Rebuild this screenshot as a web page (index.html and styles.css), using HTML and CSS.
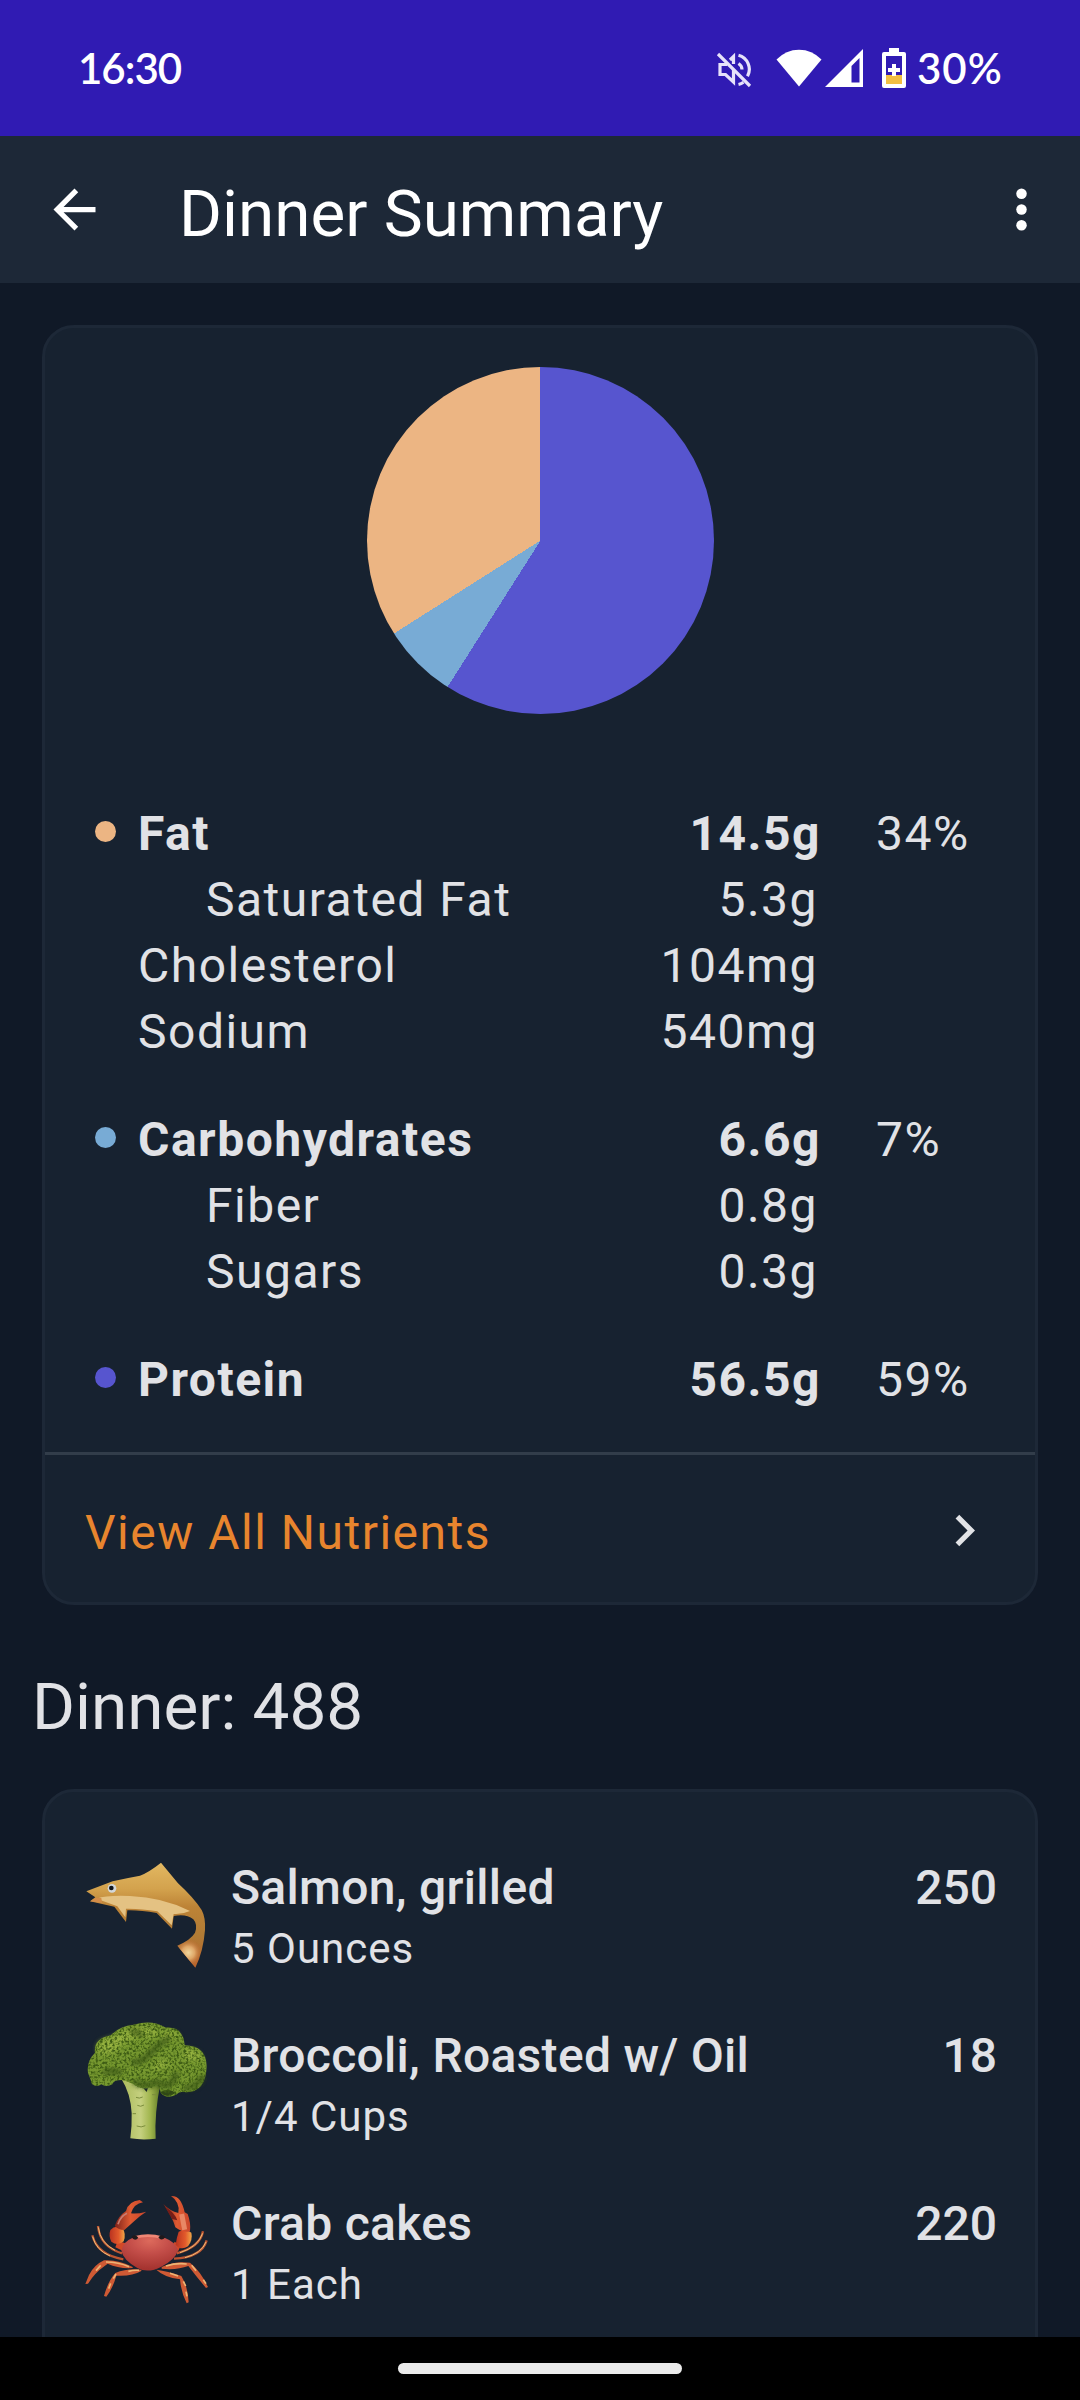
FILE: index.html
```html
<!DOCTYPE html>
<html lang="en">
<head>
  <meta charset="UTF-8">
  <meta name="viewport" content="width=device-width, initial-scale=1.0">
  <title>Dinner Summary</title>
  <link rel="stylesheet" href="styles.css">
</head>
<body>

  <div class="status-bar">
    <span class="clock">16:30</span>
    <div class="status-icons">
      <svg class="icon-mute" viewBox="0 0 36 36" fill="none" stroke="#e6e2fa" stroke-width="3.2">
        <path d="M11 12.500H4v10h5.500l8 7.500V18M14 8l3.500-3.500V12" />
        <path d="M22.500 3.200a14.500 14.500 0 0 1 9 21M22.500 32.500a14 14 0 0 0 5-2.200M22.500 11.500a7.500 7.500 0 0 1 3.500 6" />
        <path d="M2 2l32 32" stroke-width="3.2" />
      </svg>
      <svg class="icon-wifi" viewBox="0 0 46 38"><path d="M.5 10.500Q10 .7 23 .7t22.500 9.800L23 37.500z" fill="#fff" /></svg>
      <svg class="icon-signal" viewBox="0 0 38 38"><path d="M38 0v38H0z M34.500 9L26.500 17v16.500h8z" fill="#fff" fill-rule="evenodd" /></svg>
      <svg class="icon-battery" viewBox="0 0 24 40">
        <path d="M7 0h10v4h5q2 0 2 2v32q0 2-2 2H2q-2 0-2-2V6q0-2 2-2h5z M4 8v28h16V8z" fill="#fff" fill-rule="evenodd" />
        <path d="M4 27h16v9H4z" fill="#f2be42" />
        <path d="M10 16h4v4h4v4h-4v4h-4v-4H6v-4h4z" fill="#fff" />
      </svg>
      <span class="battery-level">30%</span>
    </div>
  </div>

  <header class="app-bar">
    <svg class="app-icon" viewBox="0 0 24 24" fill="#fff"><path d="M20 11H7.830l5.590-5.590L12 4l-8 8 8 8 1.410-1.410L7.830 13H20v-2z" /></svg>
    <h1>Dinner Summary</h1>
    <svg class="app-icon" viewBox="0 0 24 24" fill="#fff"><circle cx="12" cy="6" r="2" /><circle cx="12" cy="12" r="2" /><circle cx="12" cy="18" r="2" /></svg>
  </header>

  <main>
    <section class="card summary">
      <div class="pie"></div>

      <div class="nutrients">
        <div class="group">
          <div class="row main"><i class="dot fat"></i><span class="label">Fat</span><span class="amount">14.5g</span><span class="percent">34%</span></div>
          <div class="row sub"><span class="label">Saturated Fat</span><span class="amount">5.3g</span></div>
          <div class="row"><span class="label">Cholesterol</span><span class="amount">104mg</span></div>
          <div class="row"><span class="label">Sodium</span><span class="amount">540mg</span></div>
        </div>
        <div class="group">
          <div class="row main"><i class="dot carbs"></i><span class="label">Carbohydrates</span><span class="amount">6.6g</span><span class="percent">7%</span></div>
          <div class="row sub"><span class="label">Fiber</span><span class="amount">0.8g</span></div>
          <div class="row sub"><span class="label">Sugars</span><span class="amount">0.3g</span></div>
        </div>
        <div class="group">
          <div class="row main"><i class="dot protein"></i><span class="label">Protein</span><span class="amount">56.5g</span><span class="percent">59%</span></div>
        </div>
      </div>

      <a class="view-all">
        <span>View All Nutrients</span>
        <svg class="chevron" viewBox="0 0 24 24" fill="#e2e3e6"><path d="M10 6L8.590 7.410 13.170 12l-4.580 4.590L10 18l6-6z" /></svg>
      </a>
    </section>

    <h2>Dinner: 488</h2>

    <section class="card foods">
      <div class="food">
        <svg class="food-icon" viewBox="72 36 378 378">
          <defs>
            <linearGradient id="fishBody" x1="0" y1="0" x2="0" y2="1">
              <stop offset="0" stop-color="#e2b862" />
              <stop offset=".25" stop-color="#d3a24d" />
              <stop offset=".42" stop-color="#bd8336" />
              <stop offset=".7" stop-color="#b07b35" />
              <stop offset="1" stop-color="#b9632c" />
            </linearGradient>
            <radialGradient id="fishTail" cx="385" cy="338" r="42" gradientUnits="userSpaceOnUse">
              <stop offset="0" stop-color="#f0d69c" />
              <stop offset=".45" stop-color="#dfa768" />
              <stop offset="1" stop-color="#b9632c" stop-opacity="0" />
            </radialGradient>
          </defs>
          <path d="M79 154L158 124Q200 114 240 107Q268 96 303 68L354 130Q400 172 425 210Q437 232 435 270Q430 335 406 383L352 317Q392 300 405 278Q414 254 400 238Q378 220 341 228L336 266L290 219Q240 210 202 211L198 246L163 200L90 184L106 172Z" fill="url(#fishBody)" />
          <path d="M110 176Q140 165 210 168Q310 172 390 213Q365 224 341 222L335 256L292 214Q240 205 198 206L196 232L172 199Z" fill="#e4c283" />
          <path d="M352 317Q385 303 401 285L427 320L406 383z" fill="url(#fishTail)" />
          <path d="M91 184L107 173L124 174L126 189z" fill="#d48d49" />
          <circle cx="156" cy="145" r="13" fill="#d3d7d9" />
          <circle cx="154" cy="144" r="7" fill="#10151b" />
        </svg>
        <div class="food-text"><span class="food-name">Salmon, grilled</span><span class="serving">5 Ounces</span></div>
        <span class="calories">250</span>
      </div>

      <div class="food">
        <svg class="food-icon" viewBox="72 60 378 378">
          <defs>
            <linearGradient id="stem" x1="0" y1="0" x2="1" y2="0">
              <stop offset="0" stop-color="#a9b95a" />
              <stop offset=".5" stop-color="#c5d07f" />
              <stop offset=".75" stop-color="#a0b54d" />
              <stop offset="1" stop-color="#5f7a26" />
            </linearGradient>
            <filter id="florets" x="0" y="0" width="1" height="1" color-interpolation-filters="sRGB">
              <feTurbulence type="fractalNoise" baseFrequency=".14" numOctaves="2" seed="4" />
              <feColorMatrix values="0 0 0 0 .24  0 0 0 0 .36  0 0 0 0 .08  3.500 0 0 0 -1.500" />
              <feComposite in2="SourceAlpha" operator="in" result="specks" />
              <feMerge><feMergeNode in="SourceGraphic" /><feMergeNode in="specks" /></feMerge>
            </filter>
            <filter id="shade"><feGaussianBlur stdDeviation="8" /></filter>
          </defs>
          <path d="M183 235Q212 280 215 340Q216 380 211 415Q248 421 287 416Q283 340 301 252L268 250L260 276Q235 245 215 230Z" fill="url(#stem)" />
          <path d="M228 292q10 5 20-1M232 316q10 6 20-1M230 378q14 6 26-1M218 341h10M276 284h12" fill="none" stroke="#7c8d3d" stroke-width="3" />
          <g filter="url(#florets)">
            <path d="M105 158Q100 116 153 106Q177 78 222 74Q275 57 318 83Q370 80 374 136Q438 137 440 198Q438 276 378 277Q360 272 348 284Q320 298 303 280L296 258Q260 270 235 262Q205 242 185 240Q160 240 157 253Q139 263 124 253Q110 264 96 252Q92 238 84 219Q79 184 105 158Z" fill="#76982f" />
            <path d="M160 112Q220 70 290 90Q305 104 260 110Q190 112 170 150Q140 170 112 152Q105 120 160 112M370 150Q420 140 428 185Q400 170 380 180M280 190Q312 175 335 198Q300 190 288 218M300 105Q340 84 360 110Q330 106 318 130" fill="#97b33f" filter="url(#shade)" />
            <g filter="url(#shade)" fill="none" stroke="#334b14" stroke-width="15" opacity=".8">
              <path d="M215 190Q255 185 285 145L330 110M220 245Q260 265 292 245Q330 280 350 215M130 220Q160 205 185 222M370 265Q420 260 428 225M212 92L250 105" />
            </g>
            <path d="M303 275Q328 264 347 278Q323 297 303 280" fill="#304816" />
          </g>
        </svg>
        <div class="food-text"><span class="food-name">Broccoli, Roasted w/ Oil</span><span class="serving">1/4 Cups</span></div>
        <span class="calories">18</span>
      </div>

      <div class="food">
        <svg class="food-icon" viewBox="72 54 378 378">
          <defs>
            <radialGradient id="shell" cx=".5" cy=".15" r=".8">
              <stop offset="0" stop-color="#dd6a5c" />
              <stop offset=".45" stop-color="#c44e49" />
              <stop offset="1" stop-color="#a53430" />
            </radialGradient>
            <linearGradient id="claw" x1="0" y1="0" x2="1" y2="0">
              <stop offset="0" stop-color="#7c2119" />
              <stop offset=".5" stop-color="#e05b32" />
              <stop offset="1" stop-color="#c9452b" />
            </linearGradient>
            <linearGradient id="joint" x1="0" y1="0" x2="1" y2="0">
              <stop offset="0" stop-color="#b93220" />
              <stop offset=".6" stop-color="#e25a2b" />
              <stop offset="1" stop-color="#f0a847" />
            </linearGradient>
          </defs>
          <!-- thin upper legs -->
          <g fill="none" stroke="#bd5531" stroke-width="7">
            <path d="M186 250Q120 230 114 168M190 268Q112 255 97 196M350 250Q420 232 429 184M342 266Q425 262 440 211" />
          </g>
          <g fill="none" stroke="#e9bd77" stroke-width="3">
            <path d="M165 241Q120 218 115 172M150 258Q108 240 98 200M360 248Q414 231 428 190M375 263Q425 250 438 216" />
          </g>
          <!-- lower legs -->
          <g fill="#cf5a34">
            <path d="M218 291Q174 268 132 271Q102 285 87 315L76 342L84 341Q106 307 130 291L143 281Q178 297 218 294z" />
            <path d="M244 299Q202 294 166 309Q145 332 132 378L139 380Q159 354 169 317Q215 320 244 303z" />
            <path d="M305 291Q344 272 390 278Q421 302 444 351L438 354Q408 318 385 288Q350 301 305 296z" />
            <path d="M289 299Q323 303 364 318Q384 350 386 397L380 400Q363 366 360 328Q313 322 289 299z" />
          </g>
          <path d="M138 276Q175 276 207 290M108 302l14-16M160 326l8-14M146 356l6-16M205 304Q220 300 237 301M318 288Q350 278 380 282M395 286l13 16M430 329l8 12M330 310l24 8M370 334l7 14M378 365l3 14" fill="none" stroke="#edb574" stroke-width="5" />
          <!-- claws -->
          <path d="M173 212L197 220L191 244L166 232zM344 215L362 228L353 246L337 229z" fill="#d24827" />
          <path d="M151 180Q166 164 188 175Q199 192 191 214Q173 230 154 215Q145 198 151 180" fill="url(#joint)" />
          <path d="M356 185Q379 174 394 188Q399 209 384 229Q362 243 347 224Q350 202 356 185" fill="url(#joint)" />
          <path d="M164 168Q174 138 198 123Q205 94 239 90L249 97Q222 101 213 130Q230 133 259 125Q238 138 224 152L193 180Q178 181 164 168" fill="url(#claw)" />
          <path d="M346 172Q337 140 310 102Q330 123 355 129Q361 97 333 78Q363 75 374 127L383 132Q393 158 390 184Q371 190 346 172" fill="url(#claw)" />
          <path d="M174 163Q181 140 201 130" fill="none" stroke="#c87d71" stroke-width="5" />
          <path d="M315 110Q344 127 352 151L336 147z" fill="#751d17" />
          <path d="M365 132l9 47" stroke="#e88765" stroke-width="15" />
          <!-- shell -->
          <path d="M217 204Q263 188 315 204Q348 217 354 240Q347 268 304 290Q264 311 232 294Q189 269 184 242Q189 215 217 204z" fill="url(#shell)" />
          <path d="M226 202Q264 191 308 203" fill="none" stroke="#ef8775" stroke-width="8" />
          <path d="M214 201q10-11 21 2q-10 13-21-2M295 202q11-12 21 0q-12 13-21 0" fill="#20191b" />
        </svg>
        <div class="food-text"><span class="food-name">Crab cakes</span><span class="serving">1 Each</span></div>
        <span class="calories">220</span>
      </div>
    </section>
  </main>

  <footer class="nav-bar"><div class="nav-pill"></div></footer>

</body>
</html>
```

FILE: styles.css
```css
* {
  box-sizing: border-box;
}

body {
  margin: 0;
  width: 1080px;
  height: 2400px;
  display: flex;
  flex-direction: column;
  overflow: hidden;
  background: #101927;
  color: #e1e2e6;
  font-family: Roboto, sans-serif;
  font-size: 48px;
}

svg {
  display: block;
  flex: none;
}

.status-bar {
  height: 136px;
  flex: none;
  display: flex;
  justify-content: space-between;
  align-items: center;
  padding: 0 74px 0 78px;
  background: #301bb3;
  color: #fff;
  font-family: Lato, sans-serif;
  font-size: 42px;
  font-weight: 600;
}

.clock {
  letter-spacing: -1px;
}

.status-icons {
  display: flex;
  align-items: center;
}

.icon-mute {
  width: 36px;
  height: 36px;
  margin: 3px 24px 0 0;
}

.icon-wifi {
  width: 46px;
  height: 38px;
  margin-right: 3px;
}

.icon-signal {
  width: 38px;
  height: 38px;
  margin-right: 19px;
}

.icon-battery {
  width: 24px;
  height: 40px;
  margin: -1px 11px 0 0;
}

.battery-level {
  width: 89px;
  letter-spacing: 1px;
}

.app-bar {
  height: 147px;
  flex: none;
  display: flex;
  align-items: center;
  padding: 0 27px 0 43px;
  background: #1d2837;
  color: #fff;
}

.app-icon {
  width: 63px;
  height: 63px;
}

h1,
h2 {
  margin: 0;
  font-size: 65.6px;
  font-weight: 400;
  line-height: 78px;
}

h1 {
  flex: 1;
  padding: 8px 0 0 73px;
}

main {
  flex: 1;
  min-height: 0;
  overflow: hidden;
  padding: 42px 42px 0;
}

.card {
  background: #172230;
  border: 3px solid #1d2837;
  border-radius: 32px;
}

.summary {
  height: 1280px;
  padding-top: 39px;
}

.pie {
  width: 347px;
  height: 347px;
  margin: 0 auto;
  border-radius: 50%;
  background: conic-gradient(#5755cf 0 59%, #78abd5 59% 66%, #ecb583 66%);
}

.nutrients {
  height: 738px;
  padding: 87px 42px 0 50px;
}

.group {
  margin-bottom: 42px;
}

.row {
  display: grid;
  grid-template-columns: 43px 1fr 260px 172px;
  height: 66px;
  line-height: 66px;
  letter-spacing: 1.5px;
}

.label {
  grid-column: 2;
}

.amount {
  grid-column: 3;
  text-align: right;
  padding-right: 3px;
}

.percent {
  grid-column: 4;
  padding-left: 55px;
}

.sub .label {
  padding-left: 68px;
}

.main .label,
.main .amount {
  font-weight: 700;
  padding-right: 0;
}

.dot {
  width: 21px;
  height: 21px;
  margin-top: 20px;
  border-radius: 50%;
}

.fat {
  background: #ecb583;
}

.carbs {
  background: #78abd5;
}

.protein {
  background: #5755cf;
}

.view-all {
  height: 153px;
  display: flex;
  align-items: center;
  justify-content: space-between;
  padding: 0 39px 0 40px;
  border-top: 3px solid #323d4a;
  color: #e8852e;
  letter-spacing: 1.5px;
}

.view-all span {
  padding-top: 4px;
}

.chevron {
  width: 63px;
  height: 63px;
}

h2 {
  padding: 63px 0 0;
  margin: 0 0 43px -10px;
}

.foods {
  height: 700px;
  padding: 60px 38px 0 39px;
}

.food {
  display: flex;
  height: 168px;
}

.food-icon {
  width: 126px;
  height: 126px;
}

.food-text {
  flex: 1;
  display: flex;
  flex-direction: column;
  padding: 6px 0 0 21px;
}

.food-name,
.calories {
  font-weight: 500;
  line-height: 60px;
}

.food-name {
  letter-spacing: 0.3px;
}

.serving {
  padding-top: 1px;
  font-size: 42px;
  line-height: 60px;
  letter-spacing: 1px;
}

.calories {
  padding-top: 6px;
}

.nav-bar {
  height: 63px;
  flex: none;
  display: flex;
  justify-content: center;
  padding-top: 26px;
  background: #000;
}

.nav-pill {
  width: 284px;
  height: 11px;
  border-radius: 6px;
  background: #ebebeb;
}
```
